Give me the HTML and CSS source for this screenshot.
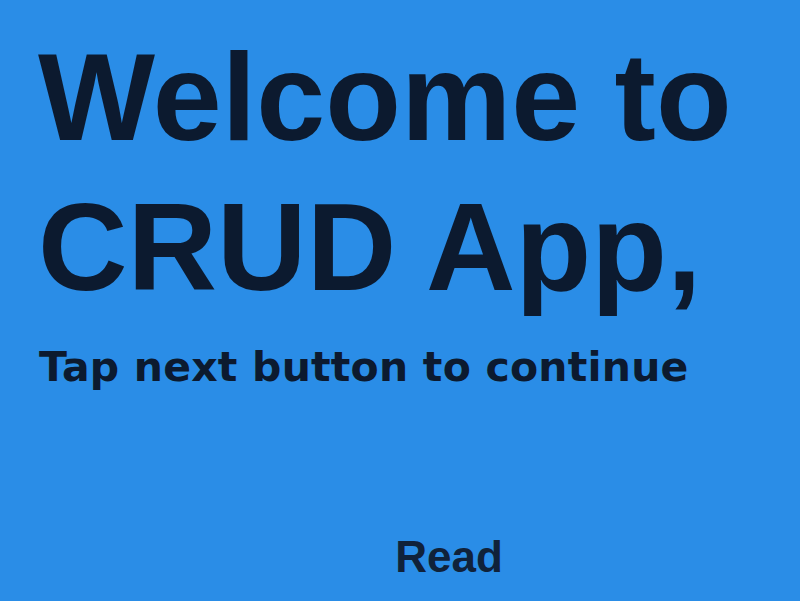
FILE: index.html
```html
<!DOCTYPE html>
<html>
<head>
<meta charset="utf-8">
<link rel="stylesheet" href="styles.css">
</head>
<body>
<main class="screen">
  <section class="intro">
    <h1 class="title">Welcome to<br>CRUD App,</h1>
    <p class="subtitle">Tap next button to continue</p>
  </section>
  <footer class="actions">
    <span class="action">Read</span>
  </footer>
</main>
</body>
</html>
```
FILE: styles.css
```css
html, body {
  margin: 0;
  padding: 0;
  height: 100%;
}
body {
  background: #2a8de7;
  font-family: "Liberation Sans", Arial, sans-serif;
  color: #0c1a2f;
}
.screen {
  display: flex;
  flex-direction: column;
  min-height: 100vh;
  box-sizing: border-box;
  padding: 22px 0 19px 38px;
}
.title {
  margin: 0;
  font-size: 124px;
  line-height: 150px;
  font-weight: bold;
}
.subtitle {
  margin: 17px 0 0 1px;
  font-family: "DejaVu Sans", "Liberation Sans", sans-serif;
  font-size: 41px;
  line-height: 56px;
  font-weight: bold;
  letter-spacing: 0.2px;
}
.actions {
  margin-top: auto;
  display: flex;
  justify-content: center;
  padding-left: 60px;
}
.action {
  font-size: 44px;
  line-height: 50px;
  font-weight: bold;
  color: #10223a;
}
```
